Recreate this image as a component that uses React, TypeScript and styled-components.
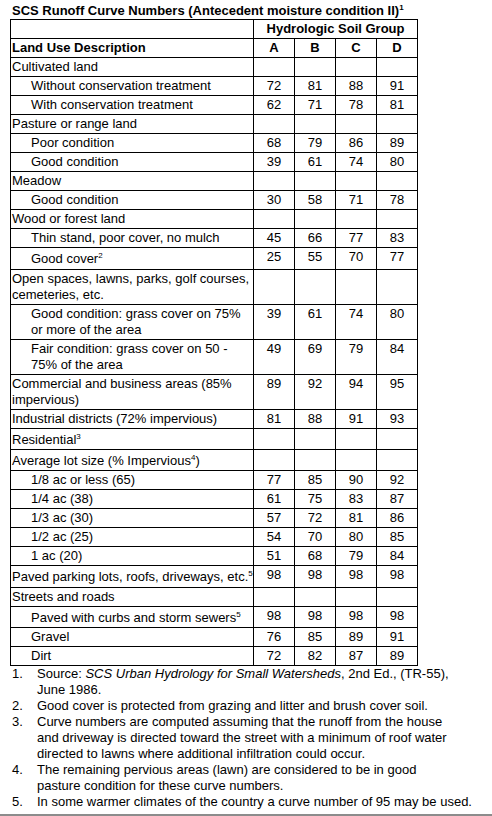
import React from "react";
import styled, { createGlobalStyle } from "styled-components";

type Row = {
  label: React.ReactNode;
  values?: number[];
  indent?: boolean;
};

const GlobalStyle = createGlobalStyle`
  html, body {
    margin: 0;
    padding: 0;
    background: #fff;
  }
  body {
    font-family: "Liberation Sans", Arial, sans-serif;
    color: #000;
  }
`;

const Page = styled.div`
  width: 492px;
  height: 816px;
  box-sizing: border-box;
  padding: 1px 0 0 10px;
  border-bottom: 2px solid #8c8c8c;
  font-size: 13px;
  line-height: 16px;
  overflow: hidden;
`;

const Title = styled.h1`
  margin: 0;
  padding-left: 2px;
  font-size: 13px;
  line-height: 16px;
  font-weight: bold;
  white-space: nowrap;
`;

const Sup = styled.sup`
  font-size: 8px;
  line-height: 13px;
  vertical-align: super;
`;

const Table = styled.table`
  border-collapse: collapse;
  table-layout: fixed;
  width: 408px;
`;

const Cell = styled.td<{ $indent?: boolean; $center?: boolean; $bold?: boolean }>`
  border: 1px solid #000;
  padding: 1px 1px 1px ${(p) => (p.$indent ? "20px" : "1px")};
  text-align: ${(p) => (p.$center ? "center" : "left")};
  font-weight: ${(p) => (p.$bold ? "bold" : "normal")};
  vertical-align: top;
  white-space: nowrap;
`;

const Notes = styled.ol`
  list-style: none;
  margin: 0;
  padding: 0 0 0 2px;
`;

const Note = styled.li`
  display: grid;
  grid-template-columns: 25px auto;
  white-space: nowrap;
`;

const rows: Row[] = [
  { label: "Cultivated land" },
  { label: "Without conservation treatment", values: [72, 81, 88, 91], indent: true },
  { label: "With conservation treatment", values: [62, 71, 78, 81], indent: true },
  { label: "Pasture or range land" },
  { label: "Poor condition", values: [68, 79, 86, 89], indent: true },
  { label: "Good condition", values: [39, 61, 74, 80], indent: true },
  { label: "Meadow" },
  { label: "Good condition", values: [30, 58, 71, 78], indent: true },
  { label: "Wood or forest land" },
  { label: "Thin stand, poor cover, no mulch", values: [45, 66, 77, 83], indent: true },
  { label: <>Good cover<Sup>2</Sup></>, values: [25, 55, 70, 77], indent: true },
  { label: <>Open spaces, lawns, parks, golf courses,<br />cemeteries, etc.</> },
  {
    label: <>Good condition: grass cover on 75%<br />or more of the area</>,
    values: [39, 61, 74, 80],
    indent: true,
  },
  {
    label: <>Fair condition: grass cover on 50 -<br />75% of the area</>,
    values: [49, 69, 79, 84],
    indent: true,
  },
  { label: <>Commercial and business areas (85%<br />impervious)</>, values: [89, 92, 94, 95] },
  { label: "Industrial districts (72% impervious)", values: [81, 88, 91, 93] },
  { label: <>Residential<Sup>3</Sup></> },
  { label: <>Average lot size (% Impervious<Sup>4</Sup>)</> },
  { label: "1/8 ac or less (65)", values: [77, 85, 90, 92], indent: true },
  { label: "1/4 ac (38)", values: [61, 75, 83, 87], indent: true },
  { label: "1/3 ac (30)", values: [57, 72, 81, 86], indent: true },
  { label: "1/2 ac (25)", values: [54, 70, 80, 85], indent: true },
  { label: "1 ac (20)", values: [51, 68, 79, 84], indent: true },
  { label: <>Paved parking lots, roofs, driveways, etc.<Sup>5</Sup></>, values: [98, 98, 98, 98] },
  { label: "Streets and roads" },
  { label: <>Paved with curbs and storm sewers<Sup>5</Sup></>, values: [98, 98, 98, 98], indent: true },
  { label: "Gravel", values: [76, 85, 89, 91], indent: true },
  { label: "Dirt", values: [72, 82, 87, 89], indent: true },
];

const notes: React.ReactNode[] = [
  <>
    Source: <i>SCS Urban Hydrology for Small Watersheds</i>, 2nd Ed., (TR-55),
    <br />
    June 1986.
  </>,
  <>Good cover is protected from grazing and litter and brush cover soil.</>,
  <>
    Curve numbers are computed assuming that the runoff from the house
    <br />
    and driveway is directed toward the street with a minimum of roof water
    <br />
    directed to lawns where additional infiltration could occur.
  </>,
  <>
    The remaining pervious areas (lawn) are considered to be in good
    <br />
    pasture condition for these curve numbers.
  </>,
  <>In some warmer climates of the country a curve number of 95 may be used.</>,
];

export default function App() {
  return (
    <>
      <GlobalStyle />
      <Page>
        <Title>
          SCS Runoff Curve Numbers (Antecedent moisture condition II)<Sup>1</Sup>
        </Title>
        <Table>
          <colgroup>
            <col style={{ width: 243 }} />
            <col style={{ width: 41 }} />
            <col style={{ width: 41 }} />
            <col style={{ width: 41 }} />
            <col style={{ width: 41 }} />
          </colgroup>
          <thead>
            <tr>
              <Cell />
              <Cell colSpan={4} $center $bold>
                Hydrologic Soil Group
              </Cell>
            </tr>
            <tr>
              <Cell $bold>Land Use Description</Cell>
              {["A", "B", "C", "D"].map((g) => (
                <Cell key={g} $center $bold>
                  {g}
                </Cell>
              ))}
            </tr>
          </thead>
          <tbody>
            {rows.map((row, i) => (
              <tr key={i}>
                <Cell $indent={row.indent}>{row.label}</Cell>
                {[0, 1, 2, 3].map((j) => (
                  <Cell key={j} $center>
                    {row.values ? row.values[j] : ""}
                  </Cell>
                ))}
              </tr>
            ))}
          </tbody>
        </Table>
        <Notes>
          {notes.map((n, i) => (
            <Note key={i}>
              <span>{i + 1}.</span>
              <span>{n}</span>
            </Note>
          ))}
        </Notes>
      </Page>
    </>
  );
}
